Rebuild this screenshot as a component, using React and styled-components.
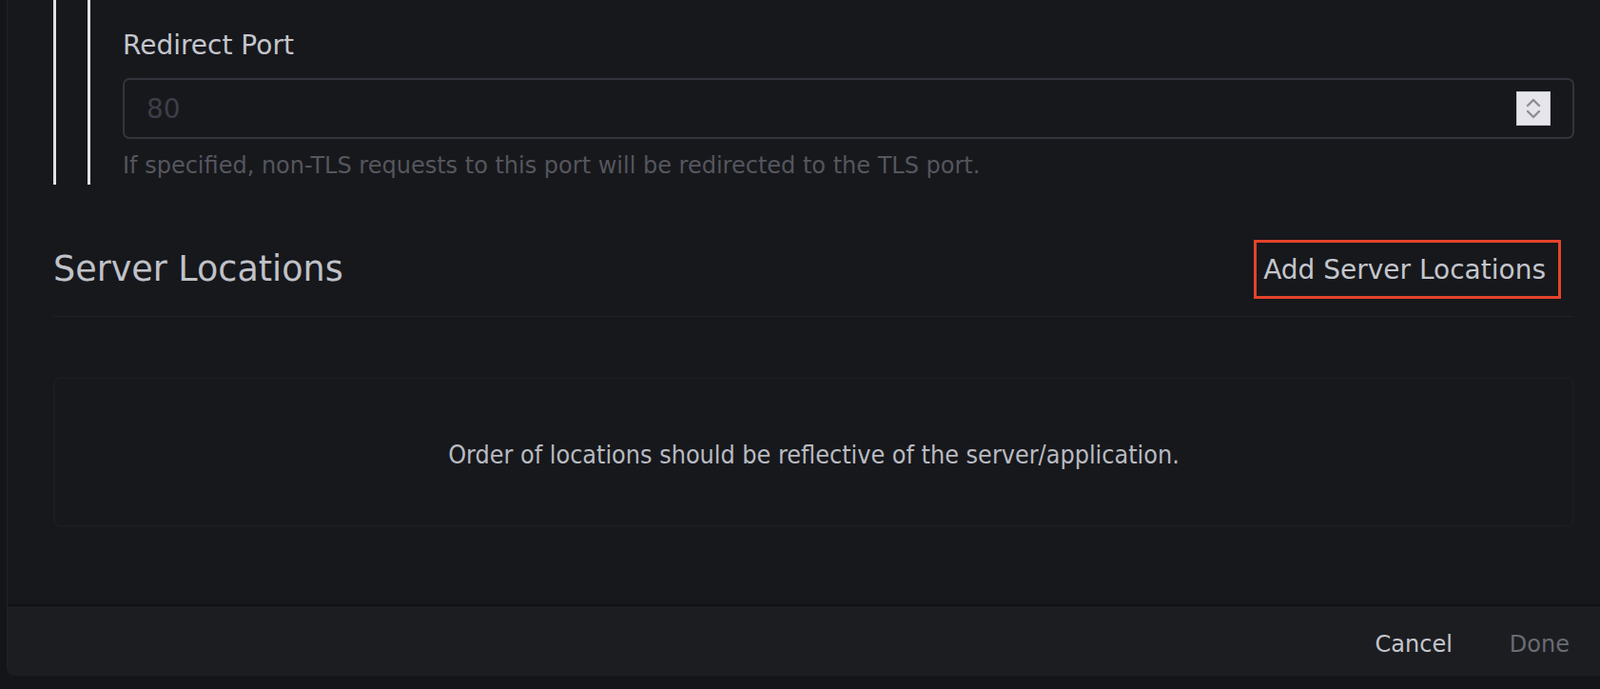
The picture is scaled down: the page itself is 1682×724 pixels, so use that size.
import React from "react";
import styled, { createGlobalStyle } from "styled-components";

const GlobalStyle = createGlobalStyle`
  html, body {
    margin: 0;
    padding: 0;
    background: #141519;
    font-family: "DejaVu Sans", "Liberation Sans", sans-serif;
    overflow: hidden;
  }
`;

function App() {
  return (
    <>
      <GlobalStyle />
      <Modal>
        <Body>
          <Indent>
            <Indent inner>
              <FieldLabel>Redirect Port</FieldLabel>
              <InputBox>
                <NumberInput type="text" placeholder="80" />
                <Spinner>
                  <svg width="20" height="28" viewBox="0 0 20 28" fill="none">
                    <path d="M4 11 L10 5 L16 11" stroke="#8c8d98" strokeWidth="2.4" strokeLinecap="round" strokeLinejoin="round" />
                    <path d="M4 17 L10 23 L16 17" stroke="#8c8d98" strokeWidth="2.4" strokeLinecap="round" strokeLinejoin="round" />
                  </svg>
                </Spinner>
              </InputBox>
              <Hint>If specified, non-TLS requests to this port will be redirected to the TLS port.</Hint>
            </Indent>
          </Indent>

          <SectionHeader>
            <SectionTitle>Server Locations</SectionTitle>
            <AddButton>Add Server Locations</AddButton>
          </SectionHeader>

          <EmptyState>
            <EmptyText>Order of locations should be reflective of the server/application.</EmptyText>
          </EmptyState>
        </Body>

        <Footer>
          <FooterButton>Cancel</FooterButton>
          <FooterButton disabled>Done</FooterButton>
        </Footer>
      </Modal>
    </>
  );
}

const Modal = styled.div`
  margin-left: 7px;
  height: 710px;
  display: flex;
  flex-direction: column;
  background: #17181c;
  border-left: 1px solid #202126;
  border-bottom-left-radius: 8px;
  overflow: hidden;
`;

const Body = styled.div`
  flex: 1;
  padding: 0 27px 0 48px;
  overflow: hidden;
`;

const Indent = styled.div`
  border-left: 3px solid #e2e2e6;
  padding-left: ${(p) => (p.inner ? "34px" : "33px")};
  padding-top: ${(p) => (p.inner ? "30px" : "0")};
  padding-bottom: ${(p) => (p.inner ? "4px" : "0")};
`;

const FieldLabel = styled.div`
  font-size: 28px;
  line-height: 36px;
  color: #c4c6cc;
`;

const InputBox = styled.div`
  margin-top: 16px;
  height: 64px;
  box-sizing: border-box;
  display: flex;
  align-items: center;
  border: 2px solid #33343b;
  border-radius: 7px;
  padding: 0 23px 0 23px;
  background: #17181c;
`;

const NumberInput = styled.input`
  flex: 1;
  background: transparent;
  border: none;
  outline: none;
  padding: 0;
  font-family: "DejaVu Sans", sans-serif;
  font-size: 28px;
  color: #c4c6cc;

  &::placeholder {
    color: #3d3e48;
  }
`;

const Spinner = styled.div`
  width: 36px;
  height: 36px;
  background: #e5e5eb;
  border: 1px solid #c9c9d0;
  box-sizing: border-box;
  display: flex;
  align-items: center;
  justify-content: center;
`;

const Hint = styled.div`
  margin-top: 12px;
  font-size: 24px;
  line-height: 32px;
  color: #55565e;
`;

const SectionHeader = styled.div`
  margin-top: 58px;
  padding-bottom: 18px;
  border-bottom: 1px solid #1f2025;
  display: flex;
  align-items: center;
  justify-content: space-between;
`;

const SectionTitle = styled.h2`
  margin: 0;
  font-weight: normal;
  font-size: 36.5px;
  line-height: 48px;
  color: #c0c2c8;
`;

const AddButton = styled.button`
  height: 62px;
  margin-right: 14px;
  padding: 0 13px 0 7px;
  background: transparent;
  border: 3px solid #e3432a;
  font-family: "DejaVu Sans", sans-serif;
  font-size: 28px;
  color: #c4c6cc;
  cursor: pointer;
`;

const EmptyState = styled.div`
  margin-top: 63px;
  height: 158px;
  box-sizing: border-box;
  border: 2px solid #1b1c21;
  border-radius: 8px;
  display: flex;
  align-items: center;
  justify-content: center;
`;

const EmptyText = styled.p`
  margin: 4px 0 0;
  font-family: "DejaVu Sans Condensed", "DejaVu Sans", sans-serif;
  font-stretch: condensed;
  font-size: 26.7px;
  color: #b9bbc1;
`;

const Footer = styled.div`
  height: 73px;
  box-sizing: border-box;
  padding: 6px 32px 0 0;
  flex-shrink: 0;
  background: #1c1d21;
  box-shadow: 0 -2px 2px rgba(0, 0, 0, 0.35);
  display: flex;
  align-items: center;
  justify-content: flex-end;
  gap: 60px;
`;

const FooterButton = styled.button`
  padding: 0;
  background: none;
  border: none;
  font-family: "DejaVu Sans", sans-serif;
  font-size: 24px;
  color: ${(p) => (p.disabled ? "#6a6b73" : "#c4c6cc")};
  cursor: ${(p) => (p.disabled ? "default" : "pointer")};
`;

export default App;
